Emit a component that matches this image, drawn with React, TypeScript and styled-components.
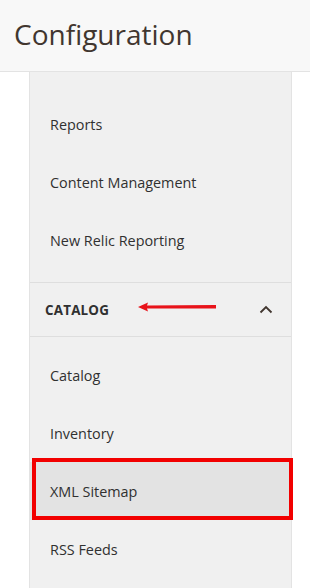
import * as React from "react";
import styled, { createGlobalStyle } from "styled-components";

const GlobalStyle = createGlobalStyle`
  html, body {
    margin: 0;
    padding: 0;
    background: #ffffff;
    font-family: "Open Sans", "Liberation Sans", sans-serif;
  }
`;

const Page = styled.div`
  width: 310px;
  min-height: 588px;
  display: flex;
  flex-direction: column;
  overflow: hidden;
`;

const Header = styled.header`
  height: 72px;
  box-sizing: border-box;
  background: #f8f8f8;
  border-bottom: 1px solid #e3e3e3;
  display: flex;
  align-items: center;
  padding-left: 14px;
`;

const Title = styled.h1`
  margin: 0;
  font-size: 28px;
  font-weight: 400;
  color: #41362f;
  line-height: 1;
  margin-top: -4px;
`;

const Main = styled.main`
  flex: 1;
  display: flex;
  padding-left: 29px;
`;

const Panel = styled.nav`
  width: 263px;
  box-sizing: border-box;
  background: #f0f0f0;
  border-left: 1px solid #e3e3e3;
  border-right: 1px solid #e3e3e3;
  display: flex;
  flex-direction: column;
  min-height: 516px;
`;

const Group = styled.ul<{ $top: number; $bottom: number }>`
  list-style: none;
  margin: 0;
  padding: ${(p) => p.$top}px 0 ${(p) => p.$bottom}px;
`;

const Item = styled.li<{ $active?: boolean }>`
  position: relative;
  height: 58px;
  display: flex;
  align-items: center;
  padding-left: 20px;
  font-size: 14.4px;
  color: #303030;
  background: ${(p) => (p.$active ? "#e3e3e3" : "transparent")};

  &::after {
    content: "";
    display: ${(p) => (p.$active ? "block" : "none")};
    position: absolute;
    top: -4px;
    left: 2px;
    right: -2px;
    bottom: 0;
    border: 4px solid #f20000;
  }
`;

const Section = styled.div`
  position: relative;
  height: 53px;
  border-top: 1px solid #dedede;
  border-bottom: 1px solid #dedede;
  display: flex;
  align-items: center;
  justify-content: space-between;
  padding: 0 18px 0 15px;
`;

const SectionTitle = styled.span`
  font-size: 13.4px;
  font-weight: 700;
  color: #303030;
  letter-spacing: 0.2px;
`;

const Pointer = styled.svg`
  position: absolute;
  left: 107px;
  top: 18px;
`;

const Chevron = styled.svg`
  display: block;
`;

const App = () => {
  return (
    <Page>
      <GlobalStyle />
      <Header>
        <Title>Configuration</Title>
      </Header>
      <Main>
        <Panel>
          <Group $top={23} $bottom={13}>
            <Item>Reports</Item>
            <Item>Content Management</Item>
            <Item>New Relic Reporting</Item>
          </Group>
          <Section>
            <SectionTitle>CATALOG</SectionTitle>
            <Pointer width="80" height="12" viewBox="0 0 80 12">
              <path d="M1 6 L11 1.5 L10 4.5 L79 4 L79 7.5 L10 7.5 L11 10.5 Z" fill="#e8131a" />
            </Pointer>
            <Chevron width="14" height="9" viewBox="0 0 14 9">
              <path d="M1.5 7.5 L7 2 L12.5 7.5" fill="none" stroke="#41362f" strokeWidth="1.8" />
            </Chevron>
          </Section>
          <Group $top={9} $bottom={9}>
            <Item>Catalog</Item>
            <Item>Inventory</Item>
            <Item $active>XML Sitemap</Item>
            <Item>RSS Feeds</Item>
          </Group>
        </Panel>
      </Main>
    </Page>
  );
};

export default App;
